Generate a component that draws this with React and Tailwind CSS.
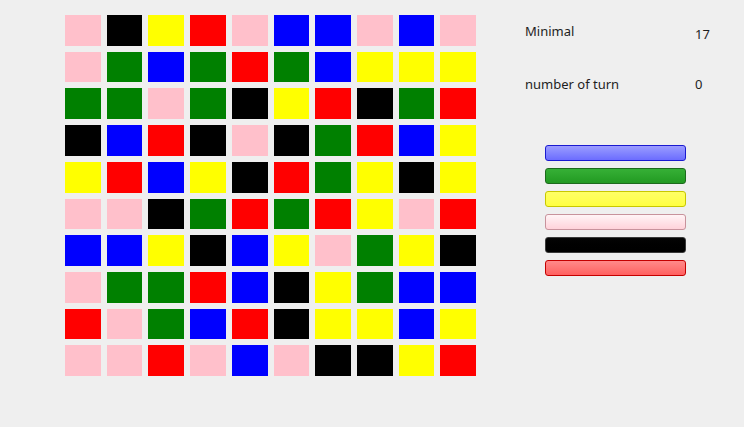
const P = 'bg-[#ffc0cb]';
const K = 'bg-[#000000]';
const Y = 'bg-[#ffff00]';
const R = 'bg-[#ff0000]';
const B = 'bg-[#0000ff]';
const G = 'bg-[#008000]';

const board = [
  [P, K, Y, R, P, B, B, P, B, P],
  [P, G, B, G, R, G, B, Y, Y, Y],
  [G, G, P, G, K, Y, R, K, G, R],
  [K, B, R, K, P, K, G, R, B, Y],
  [Y, R, B, Y, K, R, G, Y, K, Y],
  [P, P, K, G, R, G, R, Y, P, R],
  [B, B, Y, K, B, Y, P, G, Y, K],
  [P, G, G, R, B, K, Y, G, B, B],
  [R, P, G, B, R, K, Y, Y, B, Y],
  [P, P, R, P, B, P, K, K, Y, R],
];

const buttons = [
  'bg-gradient-to-b from-[#9c9cff] to-[#6c6cff] border-[#1a1ad0]',
  'bg-gradient-to-b from-[#36b036] to-[#229a22] border-[#1d6a1d]',
  'bg-gradient-to-b from-[#ffff66] to-[#ffff40] border-[#c8c800]',
  'bg-gradient-to-b from-[#fff4f6] to-[#ffd2da] border-[#c8929c]',
  'bg-gradient-to-b from-[#050505] to-[#000000] border-[#3a3a3a]',
  'bg-gradient-to-b from-[#ff8a8a] to-[#ff6060] border-[#c40000]',
];

export default function App() {
  return (
    <div className="w-[744px] h-[427px] bg-[#efefef] flex font-['Noto_Sans',sans-serif] text-[13px] text-[#1e1e1e]">
      <div className="ml-[65px] mt-[15px] w-[411px] h-[361px] grid grid-cols-10 grid-rows-10 gap-x-[6px] gap-y-[6px]">
        {board.flat().map((c, i) => (
          <div key={i} className={c} />
        ))}
      </div>

      <div className="ml-[49px] w-[200px] flex flex-col">
        <div className="flex mt-[22px] h-[20px]">
          <span className="w-[170px] leading-[18px]">Minimal</span>
          <span className="leading-[18px] mt-[3px]">17</span>
        </div>
        <div className="flex mt-[33px] h-[20px]">
          <span className="w-[170px] leading-[18px]">number of turn</span>
          <span className="leading-[18px]">0</span>
        </div>

        <div className="ml-[20px] mt-[50px] flex flex-col gap-[7px]">
          {buttons.map((b, i) => (
            <button key={i} className={`w-[141px] h-[16px] rounded-[3px] border ${b}`} />
          ))}
        </div>
      </div>
    </div>
  );
}
